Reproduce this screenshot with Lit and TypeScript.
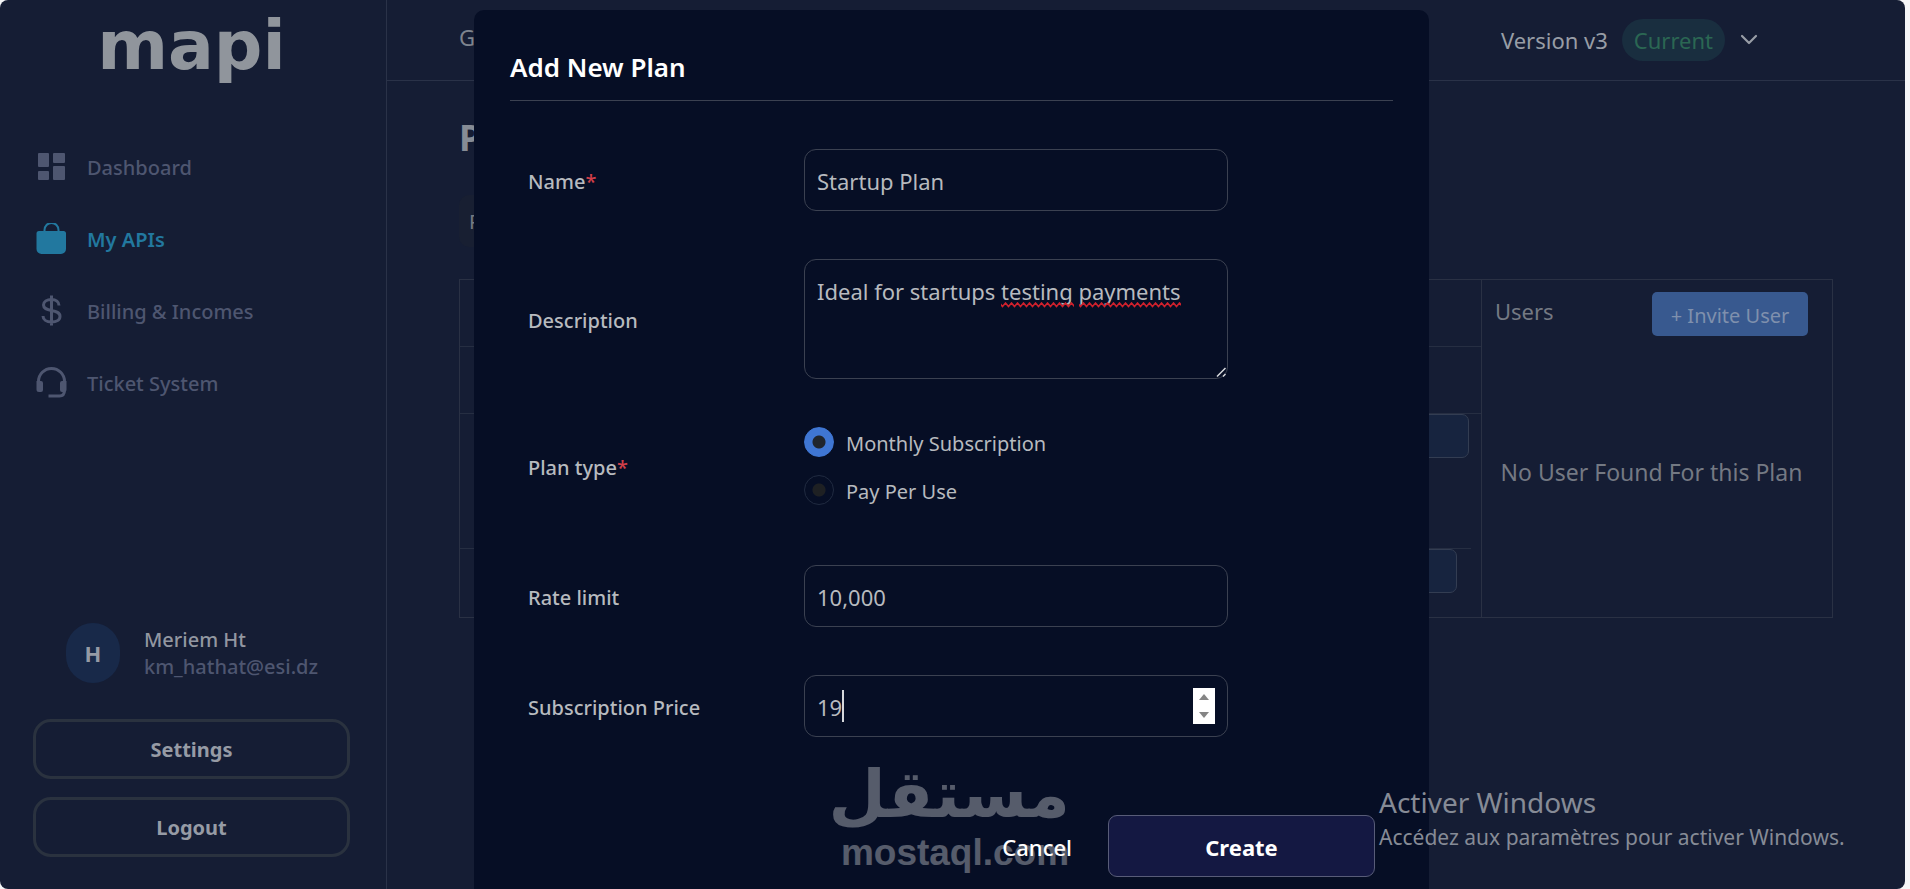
import { LitElement, html, css, svg } from "lit";
import { customElement, state } from "lit/decorators.js";
import { classMap } from "lit/directives/class-map.js";

const base = css`
  :host { font-family: "Noto Sans", "Open Sans", sans-serif; }
  *, *::before, *::after { box-sizing: border-box; }
  button, input, textarea { font: inherit; color: inherit; margin: 0; }
  button { cursor: pointer; }
  h1, h2, h3, p { margin: 0; }
`;

const icons = {
  dashboard: svg`<path fill="currentColor" d="M3 2h9a1 1 0 0 1 1 1v12a1 1 0 0 1-1 1H3a1 1 0 0 1-1-1V3a1 1 0 0 1 1-1zM18 2h10a1 1 0 0 1 1 1v8a1 1 0 0 1-1 1H18a1 1 0 0 1-1-1V3a1 1 0 0 1 1-1zM18 15h10a1 1 0 0 1 1 1v12a1 1 0 0 1-1 1H18a1 1 0 0 1-1-1V16a1 1 0 0 1 1-1zM3 20h9a1 1 0 0 1 1 1v7a1 1 0 0 1-1 1H3a1 1 0 0 1-1-1v-7a1 1 0 0 1 1-1z"/>`,
  bag: svg`<path fill="none" stroke="currentColor" stroke-width="2" d="M8.500 10V7a7 7 0 0 1 14 0v3"/><path fill="currentColor" d="M3 8h24.500a2.500 2.500 0 0 1 2.500 2.500V26a5 5 0 0 1-5 5H5.500a5 5 0 0 1-5-5V10.500A2.500 2.500 0 0 1 3 8z"/>`,
  dollar: svg`<path fill="none" stroke="currentColor" stroke-width="3" d="M23 10.500C23 7 20 4.500 15.500 4.500S7.500 6.500 7.500 10s3 4.500 8 5.500 8.500 2 8.500 5.700-3.500 5.800-8.500 5.800-8.500-2.500-8.500-6M15.500.500v30"/>`,
  headset: svg`<path fill="none" stroke="currentColor" stroke-width="3" d="M2.500 16v-1.500a13 13 0 0 1 26 0V23c0 4-2 6-5 6h-11"/><path fill="currentColor" d="M.500 14H5a2 2 0 0 1 2 2v7a2 2 0 0 1-2 2H3a2.500 2.500 0 0 1-2.500-2.500zM30.500 14H26a2 2 0 0 0-2 2v7a2 2 0 0 0 2 2h2a2.500 2.500 0 0 0 2.500-2.500z"/>`,
};

@customElement("app-sidebar")
class AppSidebar extends LitElement {
  static styles = [base, css`
    :host {
      display: flex; flex-direction: column; width: 387px; flex: none;
      padding: 0 36px 32px 33px; border-right: 1px solid #2a3248;
    }
    .brand {
      font-family: "DejaVu Sans", sans-serif; font-weight: 700; font-size: 68px; line-height: 76px;
      color: #90959c; text-align: center; padding-top: 8px;
    }
    nav { display: flex; flex-direction: column; margin-top: 47px; }
    .item {
      display: flex; align-items: center; gap: 19px; height: 72px; padding-left: 3px;
      color: #4e5670; text-decoration: none; font-size: 20px; font-weight: 500;
    }
    .item svg { width: 32px; height: 32px; }
    .active { color: #22789f; font-weight: 600; }
    .profile { display: flex; align-items: center; gap: 24px; margin: auto 0 36px 33px; }
    .avatar {
      display: grid; place-items: center; width: 54px; height: 60px; border-radius: 27px;
      background: #182949; color: #959aa5; font-size: 22px; font-weight: 700;
    }
    .who { font-size: 20px; line-height: 27px; font-weight: 500; color: #9297a1; }
    .mail { color: #4e5670; }
    .actions { display: grid; gap: 18px; }
    .action {
      height: 60px; border: 3px solid #2a323f; border-radius: 18px; background: none;
      color: #969ba5; font-size: 20px; font-weight: 700;
    }
  `];

  private items = [
    { label: "Dashboard", icon: icons.dashboard },
    { label: "My APIs", icon: icons.bag, active: true },
    { label: "Billing & Incomes", icon: icons.dollar },
    { label: "Ticket System", icon: icons.headset },
  ];

  render() {
    return html`
      <div class="brand">mapi</div>
      <nav>
        ${this.items.map((i) => html`
          <a href="#" class=${classMap({ item: true, active: !!i.active })}>
            <svg viewBox="0 0 32 32" aria-hidden="true">${i.icon}</svg>${i.label}
          </a>`)}
      </nav>
      <div class="profile">
        <div class="avatar">H</div>
        <div class="who"><div>Meriem Ht</div><div class="mail">km_hathat@esi.dz</div></div>
      </div>
      <div class="actions">
        <button class="action">Settings</button>
        <button class="action">Logout</button>
      </div>`;
  }
}

@customElement("plans-page")
class PlansPage extends LitElement {
  static styles = [base, css`
    :host { display: flex; flex-direction: column; flex: 1; min-width: 0; color: #747983; font-size: 22px; }
    header {
      display: flex; align-items: center; justify-content: space-between; height: 81px;
      padding: 0 130px 0 72px; border-bottom: 1px solid #2a3248; color: #989da6;
    }
    .section { color: #7e848e; padding-bottom: 6px; }
    .version {
      display: flex; align-items: center; gap: 14px; border: 0; background: none; padding: 0 16px;
    }
    .badge { background: #192e3f; color: #2b6753; border-radius: 21px; padding: 0 12px; line-height: 42px; }
    .version svg { width: 20px; height: 20px; }
    main { padding: 28px 72px 0; }
    h1 { font-size: 36px; line-height: 58px; color: #868c95; }
    .tab {
      margin-top: 28px; height: 52px; padding: 0 10px; border: 0; border-radius: 10px;
      background: #181f32; font-size: 20px;
    }
    .panel { display: grid; grid-template-columns: 1fr 350px; margin-top: 32px; border: 1px solid #2a3144; }
    .limits { border-right: 1px solid #2a3144; height: 337px; padding-top: 66px; }
    .line { border-top: 1px solid #262e42; height: 67px; }
    .line.tall { height: 135px; }
    .last { margin-right: 10px; }
    .limits button {
      display: block; width: 200px; height: 44px; margin: 0 12px 0 auto; border: 1px solid #333d52;
      border-radius: 7px; background: #17243f;
    }
    .limits .last button { margin-right: 14px; }
    .users { display: flex; flex-direction: column; padding: 12px 24px 0 13px; }
    .bar { display: flex; justify-content: space-between; align-items: center; }
    h2 { font-size: 22px; font-weight: 400; padding-bottom: 6px; }
    .invite {
      height: 44px; width: 156px; padding: 2px 0 0; border: 0; border-radius: 5px;
      background: #38598f; color: #7f90ad; font-size: 20px;
    }
    .empty { text-align: center; font-size: 23px; margin-top: 121px; line-height: 30px; }
  `];

  render() {
    return html`
      <header>
        <span class="section">General</span>
        <button class="version">
          Version v3 <span class="badge">Current</span>
          <svg viewBox="0 0 20 20" aria-hidden="true"><path d="M3 6l7 7 7-7" fill="none" stroke="currentColor" stroke-width="2.200" stroke-linecap="round" stroke-linejoin="round"/></svg>
        </button>
      </header>
      <main>
        <h1>Plans</h1>
        <button class="tab">Plans</button>
        <section class="panel">
          <div class="limits">
            <div class="line"></div>
            <div class="line tall"><button aria-label="Edit limit"></button></div>
            <div class="line last"><button aria-label="Edit price"></button></div>
          </div>
          <div class="users">
            <div class="bar"><h2>Users</h2><button class="invite">+ Invite User</button></div>
            <p class="empty">No User Found For this Plan</p>
          </div>
        </section>
      </main>`;
  }
}

@customElement("plan-dialog")
class PlanDialog extends LitElement {
  static styles = [base, css`
    :host { display: block; }
    .dialog {
      width: 50vw; height: 100%; margin: 0 auto; padding: 36px 36px 12px; color: #b7babf;
      background: #060e25; border-radius: 10px 10px 0 0; font-size: 22px;
    }
    h2 {
      font-size: 26px; line-height: 42px; font-weight: 600; color: #fff;
      padding-bottom: 12px; border-bottom: 1px solid #3b4151;
    }
    form { display: grid; gap: 48px; padding: 48px 18px 0; }
    .row { display: grid; grid-template-columns: 276px 50%; align-items: center; }
    .label { font-size: 20px; font-weight: 500; padding-top: 2px; }
    .required { color: #d13f49; }
    .field { position: relative; display: grid; }
    input[type="text"], input[type="number"], textarea {
      width: 100%; height: 62px; padding: 2px 12px 0; border: 1px solid #3b4151; border-radius: 12px;
      background: transparent; outline: none;
    }
    textarea { height: 120px; padding-top: 16px; line-height: 30px; resize: none; display: block; overflow: hidden; }
    input[type="number"] { appearance: textfield; }
    input::-webkit-inner-spin-button { appearance: none; margin: 0; }
    .spelling { position: absolute; left: 197px; top: 43px; width: 184px; height: 6px; pointer-events: none; }
    .grip { position: absolute; right: 2px; bottom: 2px; width: 10px; height: 10px; pointer-events: none; }
    .caret { position: absolute; left: 38px; top: 15px; width: 2px; height: 32px; background: #d6d8dc; }
    .spin { position: absolute; right: 13px; top: 13px; display: grid; width: 22px; height: 36px; background: #fff; }
    .spin button { display: grid; place-items: center; padding: 0; border: 0; background: none; color: #858585; }
    .spin svg { width: 10px; height: 6px; }
    .types { display: grid; gap: 18px; padding: 0; margin: 0 0 12px; }
    .type { display: flex; align-items: center; gap: 12px; height: 30px; font-size: 20px; }
    .type span { padding-top: 2px; }
    .row.group .label { padding-bottom: 12px; }
    input[type="radio"] {
      appearance: none; width: 30px; height: 30px; border: 1px solid #202a40; border-radius: 50%;
      background: radial-gradient(circle, #1e2023 6px, transparent 7px);
    }
    input[type="radio"]:checked { border-color: #3f76d3; background: radial-gradient(circle, #20252d 6px, #3f76d3 7px); }
    .buttons { display: flex; align-items: center; justify-content: flex-end; gap: 36px; margin-top: 30px; color: #fff; }
    .cancel { padding: 2px 0 0; border: 0; background: none; font-weight: 500; }
    .create {
      width: 267px; height: 62px; padding-top: 2px; border: 1px solid #585c78; border-radius: 9px; background: #141842; font-weight: 700;
    }
  `];

  @state() private price = 19;

  render() {
    return html`
      <div class="dialog" role="dialog" aria-labelledby="title">
        <h2 id="title">Add New Plan</h2>
        <form @submit=${(e: Event) => e.preventDefault()}>
          <div class="row">
            <label class="label" for="name">Name<span class="required">*</span></label>
            <div class="field"><input id="name" type="text" value="Startup Plan"></div>
          </div>
          <div class="row">
            <label class="label" for="description">Description</label>
            <div class="field">
              <textarea id="description" .value=${"Ideal for startups testing payments"}></textarea>
              <svg class="spelling" viewBox="0 0 184 6" aria-hidden="true">
                <defs><pattern id="wave" width="6" height="6" patternUnits="userSpaceOnUse"><path d="M-1.500 1L1.500 4.500 4.500 1 7.500 4.500" fill="none" stroke="#d0202c" stroke-width="1.500"/></pattern></defs>
                <rect width="73" height="6" fill="url(#wave)"/><rect x="78" width="102" height="6" fill="url(#wave)"/>
              </svg>
              <svg class="grip" viewBox="0 0 10 10" aria-hidden="true"><path d="M1 9.500L9.500 1M7 9.500L9.500 7" stroke="#d8dade" stroke-width="1.500"/></svg>
            </div>
          </div>
          <div class="row group" role="radiogroup" aria-labelledby="type-label">
            <span class="label" id="type-label">Plan type<span class="required">*</span></span>
            <div class="types">
              <label class="type"><input type="radio" name="type" checked><span>Monthly Subscription</span></label>
              <label class="type"><input type="radio" name="type"><span>Pay Per Use</span></label>
            </div>
          </div>
          <div class="row">
            <label class="label" for="rate">Rate limit</label>
            <div class="field"><input id="rate" type="text" value="10,000"></div>
          </div>
          <div class="row">
            <label class="label" for="price">Subscription Price</label>
            <div class="field">
              <input id="price" type="number" .value=${String(this.price)}>
              <span class="caret"></span>
              <div class="spin">
                <button type="button" aria-label="Increase" @click=${() => this.price++}><svg viewBox="0 0 10 6"><path d="M0 6L5 0l5 6z" fill="currentColor"/></svg></button>
                <button type="button" aria-label="Decrease" @click=${() => this.price--}><svg viewBox="0 0 10 6"><path d="M0 0l5 6 5-6z" fill="currentColor"/></svg></button>
              </div>
            </div>
          </div>
          <div class="buttons">
            <button type="button" class="cancel">Cancel</button>
            <button class="create">Create</button>
          </div>
        </form>
      </div>`;
  }
}

@customElement("app-root")
class AppRoot extends LitElement {
  static styles = [base, css`
    :host { display: block; position: relative; min-height: 100vh; background: #f4f5f7; overflow: hidden; }
    .frame {
      position: relative; display: flex; min-height: 100vh; margin-right: 5px; border-radius: 8px;
      background: #151d34; overflow: hidden;
    }
    .modal { position: absolute; inset: 10px 2px 0 0; }
    .watermark {
      position: absolute; left: 840px; bottom: 16px; width: 230px; text-align: center; white-space: nowrap;
      color: #fff; opacity: 0.32; pointer-events: none; font-weight: 700;
    }
    .arabic { font-family: "DejaVu Sans", sans-serif; font-size: 66px; line-height: 76px; }
    .latin { font-family: "Liberation Sans", sans-serif; font-size: 37px; line-height: 40px; }
    .activation { position: absolute; left: 1379px; bottom: 36px; color: #868b96; pointer-events: none; }
    .activation strong { display: block; font-weight: 400; font-size: 28px; line-height: 38px; }
    .activation span { font-size: 21px; line-height: 32px; }
  `];

  render() {
    return html`
      <div class="frame">
        <app-sidebar></app-sidebar>
        <plans-page></plans-page>
        <plan-dialog class="modal"></plan-dialog>
      </div>
      <div class="watermark">
        <div class="arabic" lang="ar" dir="rtl">مستقل</div>
        <div class="latin">mostaql.com</div>
      </div>
      <div class="activation">
        <strong>Activer Windows</strong>
        <span>Accédez aux paramètres pour activer Windows.</span>
      </div>`;
  }
}
